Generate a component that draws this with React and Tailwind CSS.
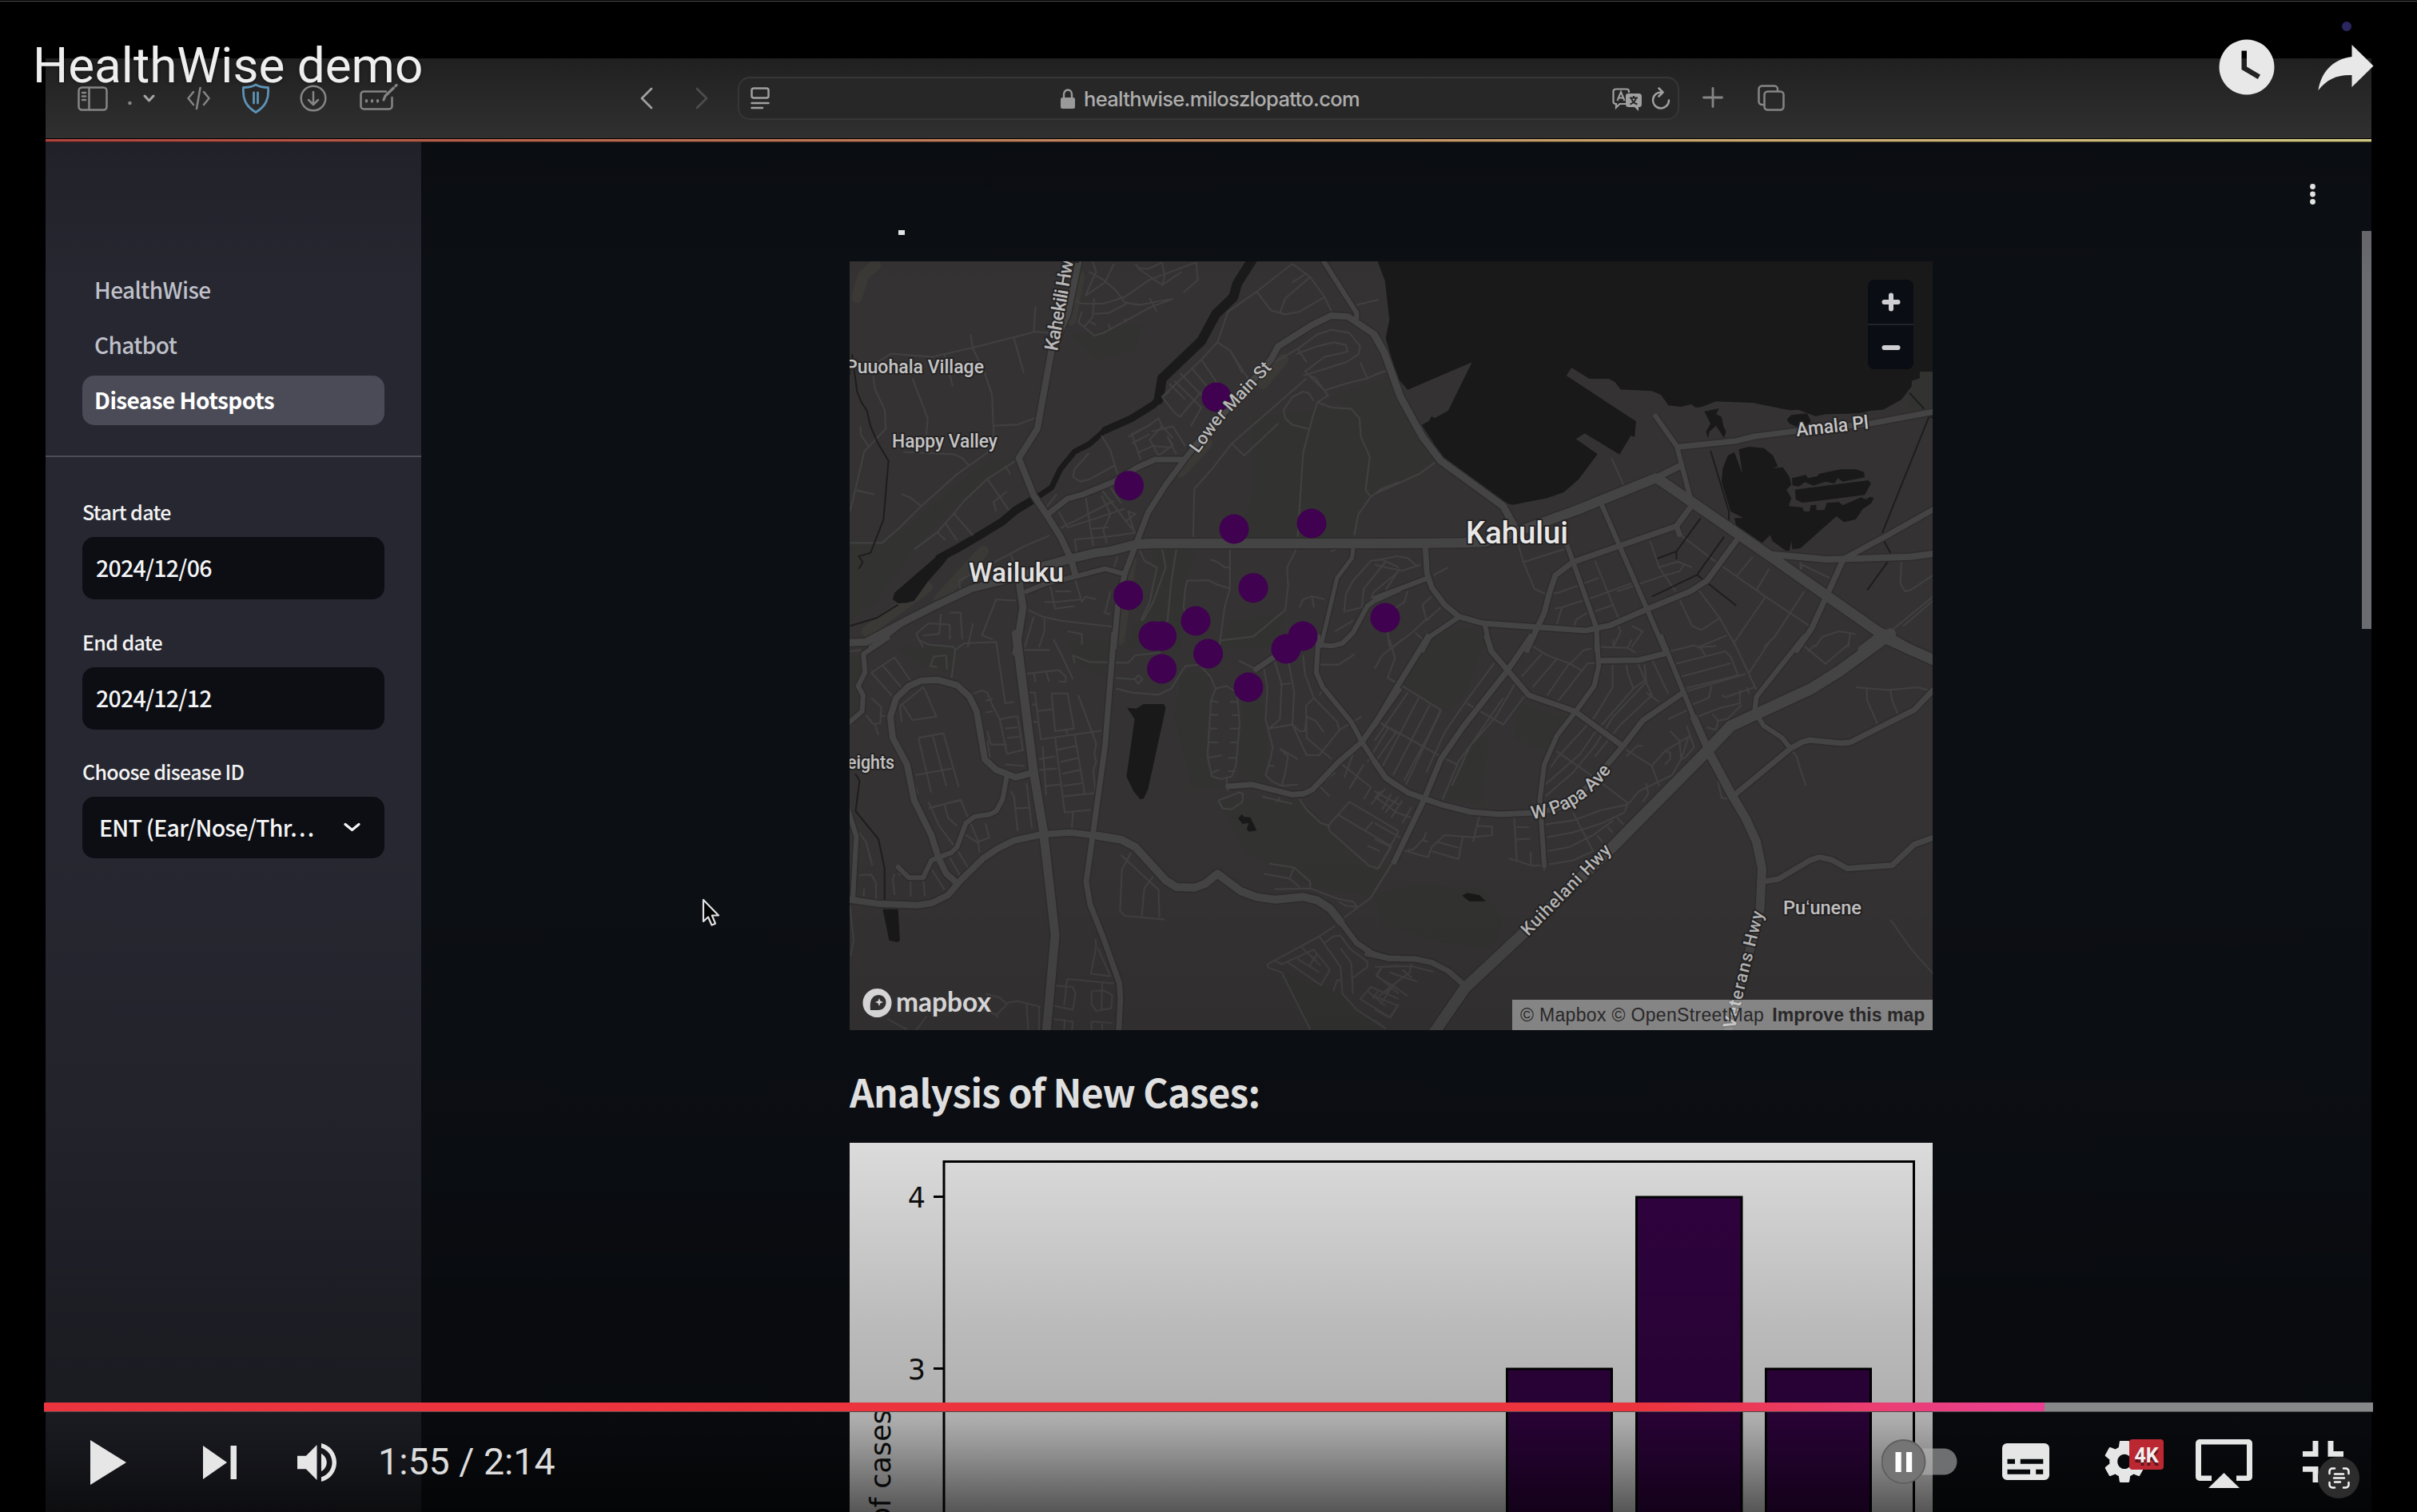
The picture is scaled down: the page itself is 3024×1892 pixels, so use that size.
import React from "react";

const CJK = "font-['Noto_Sans_CJK_SC',sans-serif]";

/* Each sheet of the map is digitised in its own grid and scaled into place. */
const SHEETS = {
  nw: "translate(1050 310) scale(0.446429 0.333333)",
  ne: "translate(1720 310) scale(0.459184 0.333333)",
  sw: "translate(1050 800) scale(0.446429 0.333333)",
  se: "translate(1720 800) scale(0.459184 0.333333)",
};

const GREEN = {
  nw: [
    "M1160 640L1330 610L1440 600L1470 700L1490 800L1480 910L1440 1085L1130 1085L1160 900Z",
    "M1380 560L1568 470V880L1490 930L1480 800L1450 640Z",
    "M30 1100L120 1105L200 1040L320 900L420 800L500 790L420 870L330 960L210 1130L100 1330L30 1400Z",
    "M650 330L850 280L830 380L720 420Z",
    "M880 1130H1000L960 1300L960 1500H800L880 1300Z",
    "M1100 1400L1250 1380L1220 1500H1060Z",
  ],
  ne: ["M0 500L60 560L130 720L165 805L100 860L0 920Z", "M1485 465H1521V600L1450 620L1463 520Z", "M160 1430L300 1430L310 1500H120Z"],
  sw: [
    "M960 120L1040 120L1030 480L1080 560L990 560L940 300Z",
    "M1160 120L1200 300L1200 540L1120 540L1130 240Z",
    "M1060 600L1290 600L1370 700L1480 850L1540 860L1480 960L1330 930L1200 840L1140 800Z",
    "M1250 1260L1400 1320L1520 1468H1320Z",
    "M30 60L60 60L68 180L60 280L30 300Z",
    "M160 30L320 20L320 130L240 100Z",
    "M640 0H760V150L660 90Z",
  ],
  se: [
    "M150 0L300 0L250 200L200 270L80 170Z",
    "M390 240L520 290L470 420L380 370Z",
    "M270 370L310 360L290 620L190 600Z",
    "M0 960L120 920L300 940L350 1060L320 1160L160 1130L20 1070Z",
  ],
};

const WATER = {
  nw: ["M265 1168L290 1150L315 1145L290 1190L250 1250L210 1325L190 1333L165 1335L150 1320L155 1295Z"],
  ne: [
    "M5 40L28 125L40 270L30 340L62 490L90 533L265 430L200 612L163 640L155 633L148 650L128 665L185 785L350 955L375 965L470 940L515 918L555 870L607 775L548 718L572 697L667 776L698 705L708 710L712 652L522 480L536 450L585 492L638 492L655 505L670 532L755 538L780 552L800 592L835 597L862 587L875 600L890 598L930 577L1030 582L1130 610L1155 608L1200 632L1230 625L1320 622L1350 612L1385 608L1435 570L1463 520L1463 500L1485 490L1485 465L1525 465L1525 40Z",
    "M962 780L980 768L1002 850L992 757L1020 747L1060 752L1085 780L1098 820L1085 827L1112 824L1130 860L1135 890L1122 908L1135 940L1128 970L1165 975L1170 990L1185 990L1188 967L1203 965L1203 985L1225 985L1232 958L1265 955L1275 967L1325 937L1338 945L1350 935L1360 940L1352 960L1330 980L1310 1020L1278 1030L1258 1008L1240 1030L1160 1128L1138 1132L1135 1100L1130 1137L1120 1137L1083 1100L1078 1078L1050 1115L985 1045L980 1015L1005 1015L970 990L945 880L948 830Z",
    "M1137 865L1175 853L1180 865L1205 858L1212 848L1270 832L1310 832L1333 842L1335 862L1275 878L1262 865L1252 885L1228 878L1195 893L1172 880L1155 897L1138 892Z",
    "M1145 908L1345 873L1352 885L1335 928L1165 957L1147 945Z",
    "M898 615L938 603L930 625L945 635L950 670L957 690L952 714L930 668L912 690L908 716L903 690L915 660Z",
    "M1123 645L1135 628L1178 622L1188 650L1180 668L1150 672L1130 660Z",
  ],
  sw: [
    "M807 257L832 260L853 243L910 243L915 258L865 565L853 598L843 600L825 570L805 515L828 300Z",
    "M122 1013L165 1013L170 1130L163 1137L140 1130Z",
    "M1118 672L1128 657L1135 667L1152 668L1170 718L1148 722L1142 712L1148 690L1130 693Z",
  ],
  se: ["M238 962L252 952L285 960L303 983L258 984Z"],
};

const RIVER = [
  ["M1160 40L1115 135L1105 185L1055 250L1015 350L905 490L895 570", 12],
  ["M905 490L895 570L880 590L820 640L745 685", 9],
  ["M745 685L700 738L660 765L620 830L595 900L545 945", 7],
  ["M545 945L495 985L455 1030L400 1075L330 1130L280 1165", 10],
];

const CREEK = {
  nw: ["M36 400L50 540L62 580L77 610L88 670L107 730L138 800L124 1020L88 1145L55 1158L66 1180L55 1205", "M165 1340L105 1390L30 1420"],
  ne: [
    "M915 762L965 990L965 1030", "M888 1015L822 1140L770 1167M822 1140V1170", "M952 1085L878 1228L755 1310M878 1228L985 1343",
    "M1510 635L1383 1070M1387 1100L1405 1145M1397 1180L1342 1285", "M1457 545L1497 605M1510 630L1521 640",
  ],
  sw: ["M45 505L57 530L46 645L110 750L127 860V985"],
  se: [],
};

const MINOR = {
  nw: [
    "M105 430L145 398L260 410L375 375L550 315L590 320M550 220L545 315M490 340L517 470M295 400L318 520M368 325L375 380L405 460L428 550L433 700L415 770L330 850L230 970L170 1050L120 1108H30",
    "M205 490L248 640L243 720M95 480L100 530L128 610L130 680L70 765L45 910L30 990M45 910L98 926M60 670V700L82 745M180 767L320 775L345 790L365 820M175 925L200 938L230 970",
    "M500 795L415 868L350 950L320 1000L275 1068L210 1133M275 1068L298 1098M298 1035L330 1098M320 995L375 1080M415 868L450 935L475 985M465 820L480 850M470 915L432 955L440 990",
    "M433 668L500 664L548 640M645 190L680 210L740 210L800 185L870 120L1000 55M770 60L745 130L690 180M700 90L740 120L775 160L800 205L840 215L935 192M830 60L840 80L905 140L960 90M835 75L865 80L905 55M905 55L912 110L905 140M1000 55L1005 120L965 168M870 190L890 240M710 50L720 90L690 180",
    "M680 240L670 280L715 330L740 320L870 225L935 192M715 190L710 260L685 300M700 275L720 290M755 285L760 310M715 248L755 245L805 210M800 265L803 280",
    "M1270 60L1170 165L1090 240L1060 355L1015 420L905 560L940 620L955 635L1015 540M1060 355L1095 385L1150 500L1220 430L1290 375L1340 325L1380 308L1430 320L1460 370L1455 400L1420 430L1300 480M1170 165L1210 235L1250 250L1290 240L1360 185M1270 60L1320 110L1360 185L1380 240M1320 110L1250 190L1235 245M1270 130L1310 95M1450 215L1510 195",
    "M1280 400L1340 370L1385 355L1420 365L1425 390L1360 410L1305 465L1360 535L1420 510L1480 490L1530 462M1285 380L1310 430M1460 430L1480 490M1310 475L1335 490L1370 555L1340 580L1330 620L1300 770L1285 1085M1340 580L1380 600L1435 605L1458 640L1462 710L1487 785L1475 910L1490 935L1455 1000L1443 1080M1490 935L1520 905L1568 880M1330 575L1315 545L1300 540L1270 560L1245 610L1250 640L1270 665L1315 680M1230 660L1135 780L1100 735L1310 490",
    "M1100 735L1045 830L995 905L992 1085M940 500L1015 600L985 670M955 470L1020 560M990 455L1055 560M1015 420L1060 510M925 510L970 570M905 560L925 540M1095 385L1130 470",
    "M810 710L870 665L820 700L845 795M870 665L895 640L905 670L870 720L895 780L935 740L920 710L945 775M820 735L870 700M835 770L885 740M875 690L935 670L970 745M905 670L935 715M885 745L930 750",
    "M735 705L760 760L780 850M700 770L660 830L655 860L675 878L700 870L775 815M730 900L800 1020L830 1070M755 890L790 960M690 930L712 1120M610 1060L770 950M615 990L640 1050L710 1020L800 980M735 930L760 1000L740 1060L750 1110M660 1095L750 1085L830 1070M660 1095L665 1140M705 1055L755 1050M800 1030L830 1000L810 990L825 1060M580 975L610 925M590 1080L520 1120L420 1190L335 1250L340 1290",
    "M480 1150L505 1230M780 1160L770 1200M840 1130L855 1175L890 1200L870 1330L845 1400M905 1130L915 1200L880 1330L850 1400M945 1130L930 1260L920 1400L880 1460M970 1280L975 1250L1035 1248L1060 1265L1095 1280M970 1280L965 1350L975 1400M1095 1130V1280L1080 1350L1065 1500M1040 1170L1060 1180L1080 1200H1095M1280 1135L1255 1200L1258 1270L1250 1360L1160 1460L1065 1475M1290 1350L1300 1320L1325 1308L1360 1320M1330 1350L1325 1310",
    "M530 1360L570 1385L620 1400L780 1425M545 1385L520 1500M575 1385V1440L560 1500M590 1260L605 1355L660 1345M605 1290H650M660 1240L680 1330L690 1310L720 1320M605 1330L680 1320M575 1330H605M760 1290L745 1370M740 1370L760 1375M440 1320L495 1325M440 1320L400 1455L430 1470M310 1370L340 1370L345 1470M250 1410L310 1415V1470M285 1375L280 1450L235 1455M215 1450L250 1410M215 1450L235 1500M375 1410L360 1500M640 1440L680 1450L680 1490",
    "M1568 1200L1520 1170L1490 1175L1440 1250L1420 1300L1415 1370M1530 1180L1470 1280L1465 1350L1420 1365M1568 1215L1500 1290L1480 1345M1390 1440L1440 1400M1378 1140L1395 1130",
  ],
  ne: [
    "M0 200L10 195M0 475L35 462M0 925L120 850L165 805M645 790L678 890M390 1110L405 1180L435 1280L465 1300L500 1295L610 1240M405 1180L520 1130M600 1175L640 1310L670 1410M490 1355L510 1350L600 1310L700 1260M510 1350L495 1420M600 1365L650 1340M660 1290L790 1230M750 1100L775 1200L820 1290M775 1200L825 1178L865 1200M790 1230L830 1215L845 1185M540 1430L550 1395L580 1370",
    "M830 1075L925 1175L1065 1310L1185 1420M1030 1160L985 1235M1075 1205L1040 1285M1170 1290L1090 1460L1060 1500M1065 1310L980 1480M880 1280L940 1390L985 1500M830 1320L865 1420L890 1435L940 1390M1160 1180V1210L1165 1190L1240 1240M1435 1180L1432 1260L1445 1290L1460 1285L1521 1230M1521 1310L1405 1440M1521 1325L1440 1420M1310 1450L1265 1440L1220 1460L1200 1500M1295 1450L1290 1500M960 1455L880 1500",
    "M0 1190L30 1200L75 1212L125 1190M0 1175L60 1158L90 1165L115 1195M65 1210L30 1285M160 1230L200 1200M90 1290L80 1330L50 1360M155 1310L130 1340L140 1395L105 1440L50 1500M180 1350L140 1400M110 1445L130 1470M35 1440L40 1500M660 1410L670 1440L650 1500M700 1420L730 1440L700 1500",
  ],
  sw: [
    "M30 45L60 40M220 0L250 20L320 28L325 40L315 145M325 40L350 15L440 10L465 240L490 235M300 60L265 65L255 100L275 105M300 60L302 115M90 125L155 68L205 165L150 215L90 125M120 95L180 190M90 220L118 255L115 315L95 318L75 285M115 288H135M100 318L110 360M175 310L170 250L235 180L240 190L272 290L205 303L175 240M375 205L400 192L415 200L430 250L450 300L490 290L500 290L515 420M450 300L470 430L515 415M410 275L430 270M430 225L410 230M465 335L500 330M470 370L505 365M465 470L520 475",
    "M222 370L292 352L335 555M222 370L258 575M262 362L300 550M213 510L315 485M160 370L190 450L220 580M250 635L340 602L390 760L420 745L410 690M250 610L280 700L330 790L365 865M258 630L340 605M295 620L305 670L330 700M350 730L390 765L393 800M415 345L425 395H470M425 470L415 380",
    "M520 130L615 115L635 140V160L615 158M545 125L550 160M580 120L588 160M515 40H590M600 0L620 50L655 150M655 60L700 85L810 88L830 60L900 50M655 60L660 90M595 203H640L658 335L605 345L595 203M525 200H548L565 375L735 343M540 245H550M555 270L598 262M535 310H560M670 210L720 390L715 430L720 460L712 490L718 575M605 370L632 650L705 640M660 360L688 580M625 590L715 578M610 415L665 400M620 460L670 445M625 505L675 490M628 550L680 540M570 400L580 585M605 440L560 450M620 545L580 550M655 650L652 710M635 340L640 355",
    "M480 570L490 590L500 720M495 635L535 632M525 540L540 710M560 490L610 485M55 725L75 760L93 850M55 885L90 883L103 915V975M70 935L68 965M155 880L150 900L155 960M165 880L200 900V965M235 895L240 965M260 865L295 940M310 820L340 890M775 145L828 150L838 135L850 150L838 167L828 150M775 185L820 200L895 208L930 185L970 100L1010 95L1040 140L1055 185",
    "M1055 185L1042 230L1032 440L1045 515L1070 525L1100 515L1112 470L1122 320L1115 200L1085 175L1055 185M1042 230L1062 237M1040 283H1062M1038 335H1060M1035 387H1062M1034 445L1072 435M1045 500L1065 490M1115 235H1095M1120 285H1100M1120 335H1095M1118 387H1095M1115 445H1090M1112 495H1090M1085 520L1090 570M1062 605L1120 575L1132 580L1130 610L1100 638L1075 635L1062 605M1120 80L1165 110M1185 590L1270 618M1235 595L1225 610",
    "M1190 110L1200 180L1195 300L1215 405L1210 440L1195 510L1215 535L1240 550L1285 545M1220 80L1240 170L1235 300L1205 335M1260 90L1275 200L1270 320L1290 345H1305L1310 290M1300 60L1305 130L1330 220L1308 250L1310 370L1380 450M1330 220L1395 310L1402 340L1345 435L1310 435L1270 320M1235 410L1258 440L1250 500L1240 550M1235 410L1285 450M1200 475H1220M1310 290L1335 305L1358 350M1345 210L1360 180M1235 170L1265 165M1205 335L1270 320M1340 95H1400L1445 55M1402 340L1465 290",
    "M1510 310L1568 355M1560 350L1500 465M1540 330L1480 460M1400 460L1490 555L1470 600M1440 430L1415 520M1470 470L1430 560M1390 500L1345 550L1375 590M1430 610L1370 700L1375 720L1485 850L1510 860L1568 720M1430 610L1568 720M1400 660L1545 775M1495 685L1475 715M1480 775L1515 795M1290 600L1310 640L1350 690L1375 700M1530 560L1490 620M1568 590L1530 650M1500 570L1568 620",
    "M790 810L830 860L895 940L897 1045M818 800L792 865L787 1020L800 1038L912 1052M880 890L855 935L848 1040M1205 842L1275 857L1320 910V935L1220 938M1190 880L1262 898L1290 930M1275 857L1262 898M1320 935L1400 975L1440 985L1452 1005L1420 1000L1400 985M1550 840L1490 970L1415 1045",
    "M1390 1075L1345 1115L1200 1220L1202 1232L1240 1250L1320 1465M1345 1115L1405 1230L1410 1330L1450 1390L1530 1460M1360 1140L1385 1115L1405 1112L1430 1160L1480 1210V1230L1440 1270M1220 1205L1240 1220L1330 1165L1375 1240L1350 1298L1255 1210M1295 1155L1350 1225M1285 1200L1345 1250M1340 1180L1318 1225M1405 1160L1435 1215L1440 1330M1385 1320L1395 1280H1410M1568 1225L1520 1230L1505 1260L1568 1330M1568 1350L1490 1305L1460 1350L1545 1420L1568 1370M1480 1320L1530 1375M1510 1320L1495 1350M1568 1280L1530 1330",
    "M718 1125L720 1155L705 1255L760 1265L725 1160M635 1300L640 1275L770 1292M605 1300L655 1305L662 1330L655 1390L600 1375M637 1300L630 1375M710 1320L740 1318L765 1335L762 1385L720 1395L707 1370V1320M737 1290L735 1390M600 1425L655 1435L652 1468M632 1425L630 1468M707 1468V1435L765 1440M737 1435V1468M410 1330L450 1345L470 1370L440 1410L400 1385M440 1410L445 1420M470 1365L500 1358L565 1380M525 1370L530 1468M560 1380V1468M245 1415L215 1468M135 1425L190 1465M30 1000L40 1130L32 1190",
  ],
  se: [
    "M40 0L55 70L35 145L50 155M75 0L20 60L0 110M75 175L180 265L150 350L80 530M35 145L75 175M90 200L0 380M120 220L20 480M150 245L50 510M180 270L85 545M10 310L90 370L180 440L225 470L185 600M225 465L265 390L350 220M325 90L250 230L190 350L140 500M385 160L330 290L260 400L210 550M250 240L350 320L415 200M430 25L470 60L530 90L562 115M455 55L400 140M495 75L430 180M530 90L470 210M600 90L580 90L495 240M570 40L590 35M570 40L530 95",
    "M610 28L690 32L710 50M650 0V25M700 0L690 30M648 95V180L600 290L500 440L480 480M685 95L690 130L705 185L600 350L560 430L465 545M735 95L740 160L650 290L600 400L540 500L465 590M715 85L755 210L670 320L600 440M755 75L800 205M705 185L735 155M740 200L775 235M805 45L870 22L890 35L900 60M880 30L930 25M820 92L955 45L970 65L990 135L830 190M835 140L970 90M850 195L1010 130M975 0L1040 190M1080 0L1020 125",
    "M865 245L910 220L918 175M880 290L935 260L995 240V190M920 280L935 305L960 300L1000 245M905 330L930 340L935 305M945 210L960 220M960 215L1035 180M1015 180L1020 205M800 300L860 260M850 325L870 405L845 445L835 450L855 365L790 420L755 475L775 550M805 345L830 380L835 450L810 510L720 570L690 620M790 470L805 450V425L790 420M680 410L755 475M730 400L715 400L685 440M740 540L745 580L730 610M495 420L600 520L690 615L680 650",
    "M465 695L540 680L620 640L690 620M470 743L540 725L620 690L680 650M470 795L530 780L595 735L650 680M475 845L540 830L595 795L540 650M365 822L430 850L462 848V868M425 797V848M380 670L387 828M385 705H420M387 752L425 748M605 735L620 760M635 705L648 725M660 670L678 695M285 665L278 700L320 703V735L268 743L190 735L155 780L145 818L80 793M278 700L268 760M240 740L228 825L155 795M170 760L230 783M140 725L132 755L145 760M132 750L105 790H92L95 800",
    "M1310 180L1400 190L1480 180L1505 190L1521 210M1340 185L1342 230L1370 318M1405 190L1410 230L1425 280M1170 25L1228 92L1290 20M1200 20L1180 45M1137 420L1150 440L1160 490L1175 550M935 530L945 595L965 598M1405 1052L1460 1160L1521 1255M0 590L60 650L100 670M15 570L0 600M45 580L20 640M75 605L45 670M100 630L75 690M0 690L70 745M0 750L45 780L10 860L0 860M45 845L0 945",
    "M0 1230L100 1227L160 1248M100 1217L95 1250L10 1340M20 1230L5 1265L60 1310L90 1340M40 1250L115 1285M75 1240L100 1270M50 1300L15 1370M0 1340L62 1375L40 1420L0 1390M0 1430L30 1462",
  ],
};

const MAJOR = {
  nw: [
    ["M0 1485L75 1480L180 1405L260 1350L370 1280L460 1250L640 1172", 9],
    ["M90 1500L180 1405", 7],
    ["M560 1200L640 1170L720 1145L760 1138L835 1112L885 1108", 11],
    ["M835 1113L885 1110H1568", 12],
    ["M672 45L640 250L595 385L555 680L503 790L545 930L585 1010L620 1085L650 1170L662 1230", 8],
    ["M585 1000L640 942L685 925L775 875L835 825L885 795H965", 7],
    ["M1000 740L965 800L915 890L865 995L835 1100L800 1225L780 1350L770 1500", 7],
    ["M1000 740L1210 420L1230 370L1325 290L1378 255L1425 258L1500 325L1530 400L1568 540", 8],
    ["M1355 45L1450 245V270", 6],
    ["M525 1290L580 1260L660 1235L745 1205L800 1225", 6],
    ["M505 1260L515 1350L495 1520", 9],
    ["M1440 1130L1437 1165L1395 1240L1350 1495", 5],
    ["M1345 1490L1380 1495L1410 1485L1440 1445L1480 1345L1500 1325L1568 1285", 6],
  ],
  ne: [
    ["M0 330L25 390L70 560L130 710L180 800L350 970L378 1040", 9],
    ["M0 1110L240 1108L300 1105L400 1060L550 985L765 865", 12],
    ["M765 865L830 820", 8],
    ["M775 870L1090 1170L1370 1440L1460 1510", 13],
    ["M765 632L823 745L860 940", 6],
    ["M828 748L985 725L1035 708L1150 688L1350 660L1525 615", 7],
    ["M865 965L822 1045L830 1075", 7],
    ["M822 1045L665 1120L540 1180L492 1230L475 1300L462 1370L415 1510", 7],
    ["M620 970L790 1510", 6],
    ["M525 1120L605 1430V1510", 6],
    ["M138 1125L142 1220L155 1275L190 1340L230 1385L295 1410L575 1437L640 1418L750 1352L860 1290L905 1250L985 1100", 7],
    ["M0 1315L145 1240", 6],
    ["M230 1385L150 1460L130 1510", 6],
    ["M300 1415L315 1510", 6],
    ["M1070 1150L1230 1170L1290 1168L1460 1160L1525 1148", 8],
    ["M1275 1170L1390 1085L1525 980", 7],
    ["M1275 1175L1230 1310L1190 1430L1150 1510", 7],
    ["M1388 1450L1330 1510", 13],
  ],
  sw: [
    ["M20 8L75 13L110 -15", 7],
    ["M135 -5L68 55L72 125L53 175L67 210L64 270L30 310", 6],
    ["M496 -20L545 500L572 720L605 1110L580 1480", 11],
    ["M770 -20L745 400L710 740L692 910L703 995L740 1120L785 1290L788 1350L783 1480", 7],
    ["M330 915L300 880L278 820L258 735L210 605L190 470L150 370L143 290L160 220L195 175L230 155L275 152L330 172L365 215L385 270L408 450L440 490L495 518L545 500", 8],
    ["M470 510L458 600L440 645L420 658L380 665L355 690L330 780L315 800L258 830L235 895H195L165 855", 6],
    ["M20 975L105 992L220 998L260 990L305 960L340 905L405 820L445 785L490 755L570 732L650 725L725 738", 8],
    ["M725 738L790 752L830 780L915 905L945 930L995 932L1025 918L1060 880L1125 945L1170 968L1220 977L1300 967L1340 980L1375 1010L1405 1060", 10],
    ["M1405 1060L1450 1140L1495 1180L1540 1198H1568", 7],
    ["M25 640L48 740L38 975", 6],
    ["M1343 -10L1337 125L1355 180L1435 310L1465 385L1530 520L1568 555", 6],
    ["M1568 190L1465 385L1400 460L1325 565L1300 580L1270 583L1155 545L1090 552", 7],
    ["M1168 112L1220 65", 7],
  ],
  se: [
    ["M145 -10L60 180L0 320", 7],
    ["M425 -10L360 120L240 330L180 450L135 600L53 835", 7],
    ["M305 -10L318 45L420 210L545 270L675 400", 7],
    ["M605 -10L610 100L598 175L548 270L497 360L462 470L450 600L462 850", 6],
    ["M0 460L30 520L90 575L180 620L260 648L340 657L450 650L520 625L590 540L680 395L730 305L835 205", 7],
    ["M780 -10L870 295", 6],
    ["M870 295L910 420", 9],
    ["M905 410L975 590L1010 670L1040 760L1055 860L1050 1010L1025 1150L960 1480", 11],
    ["M612 80L720 78L795 52", 7],
    ["M1405 -20L1265 120L1190 185L970 325L905 420L640 790L400 1110L245 1310L160 1480", 14],
    ["M1390 -5L1530 82", 13],
    ["M1170 -10L1040 215L1035 270L1060 325L1110 370L1133 410", 6],
    ["M975 590L1133 410L1165 385L1185 378L1270 390L1295 387L1470 265L1525 185", 7],
    ["M1065 908L1100 900L1185 830L1212 818L1245 828L1287 860L1410 848L1470 770L1525 743", 7],
    ["M-20 1180L40 1198L110 1200L155 1213L200 1245L250 1305", 7],
  ],
};

const CASES = [
  [1522, 497], [1412.5, 607.7], [1544, 662], [1641, 655], [1411.6, 745], [1568, 735.7], [1496, 777], [1443, 796],
  [1453.6, 796], [1630, 796], [1609, 812], [1511.6, 818], [1453.6, 837], [1562, 860], [1733, 773],
];

const SHEET_IDS = ["nw", "ne", "sw", "se"];

function Sheets({ children }) {
  return SHEET_IDS.map((id) => (
    <g key={id} transform={SHEETS[id]}>
      {children(id)}
    </g>
  ));
}

function MapLabel({ x, y, size, width, weight = 500, rotate = 0, fill = "#c4c4c4", children }) {
  return (
    <text
      x={x} y={y} fontSize={size} fontWeight={weight} fill={fill} textLength={width} lengthAdjust="spacingAndGlyphs"
      transform={rotate ? `rotate(${rotate} ${x} ${y})` : undefined}
      stroke="#252324" strokeWidth="4" strokeLinejoin="round" paintOrder="stroke" fontFamily="Roboto, sans-serif"
    >
      {children}
    </text>
  );
}

function PathLabel({ id, d, size, width, halo = 4, children }) {
  return (
    <>
      <path id={id} d={d} fill="none" />
      <text
        fontSize={size} fontWeight="500" fill="#b8b8b8" stroke="#252324" strokeWidth={halo} strokeLinejoin="round"
        paintOrder="stroke" fontFamily="Roboto, sans-serif" textLength={width}
      >
        <textPath href={"#" + id} textLength={width}>{children}</textPath>
      </text>
    </>
  );
}

function HotspotMap() {
  return (
    <div className="relative h-[962px] w-[1355px] overflow-hidden bg-[#343233]">
      <svg viewBox="1063 327 1355 962" className="block h-[962px] w-[1355px]">
        <Sheets>{(id) => GREEN[id].map((d) => <path key={d} d={d} fill="#323330" />)}</Sheets>
        <g stroke="#3c3b37" strokeWidth="14" strokeLinecap="round" fill="none" opacity=".8">
          <path d="M1072 372L1080 345L1095 332M1175 750L1230 690M1085 790L1160 735M1340 400L1350 345M1478 590L1510 555M1400 800L1415 700M1580 480L1605 450" />
        </g>
        <g transform={SHEETS.nw} fill="none" stroke="#1a1a1a" strokeLinecap="round" strokeLinejoin="round">
          {RIVER.map(([d, w]) => <path key={d} d={d} strokeWidth={w} vectorEffect="non-scaling-stroke" />)}
        </g>
        <Sheets>{(id) => WATER[id].map((d) => <path key={d} d={d} fill="#191919" />)}</Sheets>
        <Sheets>
          {(id) => MINOR[id].map((d) => (
            <path key={d} d={d} fill="none" stroke="#414040" strokeWidth="2.2" strokeLinejoin="round" vectorEffect="non-scaling-stroke" />
          ))}
        </Sheets>
        <Sheets>
          {(id) => CREEK[id].map((d) => (
            <path key={d} d={d} fill="none" stroke="#1e1d1e" strokeWidth="2" vectorEffect="non-scaling-stroke" />
          ))}
        </Sheets>
        <Sheets>
          {(id) => MAJOR[id].map(([d, w]) => (
            <path key={d} d={d} fill="none" stroke="#2e2c2d" strokeWidth={w + 3} strokeLinejoin="round" vectorEffect="non-scaling-stroke" />
          ))}
        </Sheets>
        <Sheets>
          {(id) => MAJOR[id].map(([d, w]) => (
            <path key={d} d={d} fill="none" stroke="#454444" strokeWidth={w} strokeLinejoin="round" strokeLinecap="round" vectorEffect="non-scaling-stroke" />
          ))}
        </Sheets>

        <g fill="#3f0150">
          {CASES.map(([x, y]) => <circle key={x + "-" + y} cx={x} cy={y} r="18.5" />)}
        </g>

        <MapLabel x={1058} y={467} size={24} width={173}>Puuohala Village</MapLabel>
        <MapLabel x={1116} y={560} size={24} width={132}>Happy Valley</MapLabel>
        <MapLabel x={1212} y={727.5} size={33} width={119} fill="#e2e2e2">Wailuku</MapLabel>
        <MapLabel x={1834} y={680} size={38} width={128} fill="#e8e8e8">Kahului</MapLabel>
        <MapLabel x={2248} y={546} size={24} width={91} rotate={-6}>Amala Pl</MapLabel>
        <MapLabel x={1060} y={962} size={24} width={59}>eights</MapLabel>
        <MapLabel x={2231} y={1144} size={24} width={98}>Puʻunene</MapLabel>
        <PathLabel id="lower-main" d="M1499 568L1527 530L1600 452" size={22} width={142} halo={2.5}>Lower Main St</PathLabel>
        <PathLabel id="kahekili" d="M1323 440L1333 385L1345 315L1348 290" size={24} width={126}>Kahekili Hwy</PathLabel>
        <PathLabel id="papa" d="M1917 1025C1960 1020 1995 995 2020 958" size={23} width={120}>W Papa Ave</PathLabel>
        <PathLabel id="kuihelani" d="M1912 1172L2019 1063" size={22} width={150}>Kuihelani Hwy</PathLabel>
        <PathLabel id="veterans" d="M2162 1314L2170 1290L2184 1232L2209 1132" size={22} width={178}>ui Veterans Hwy</PathLabel>

        <g fill="#e3e3e3">
          <path fillRule="evenodd" d="M1097.500 1237a18 18 0 1 0 .001 0zM1099 1245c6 0 9.500 4 9.500 9c0 6-4 10-10 10h-9.500s-1-8 1-13c2-4 5-6 9-6z" />
          <path d="M1100 1249l1.400 3.600l3.600 1.400l-3.600 1.400l-1.400 3.600l-1.400-3.600l-3.600-1.400l3.600-1.400z" />
          <text x="1121" y="1266" fontSize="35" fontWeight="700" textLength="119" lengthAdjust="spacingAndGlyphs" fontFamily="Lato, sans-serif">mapbox</text>
        </g>
      </svg>

      <div className="absolute right-[24px] top-[23px] flex h-[112px] w-[57px] flex-col overflow-hidden rounded-[8px] bg-[#0b0d14] text-[#cfcfd3]">
        <div className="flex h-[57px] items-center justify-center border-b-2 border-[#22242c]">
          <svg className="h-[24px] w-[24px]" viewBox="0 0 24 24"><path d="M12 3.500V20.500M3.500 12H20.500" stroke="currentColor" strokeWidth="6" strokeLinecap="round" /></svg>
        </div>
        <div className="flex h-[55px] items-center justify-center">
          <svg className="h-[24px] w-[24px]" viewBox="0 0 24 24"><path d="M3.500 12H20.500" stroke="currentColor" strokeWidth="6" strokeLinecap="round" /></svg>
        </div>
      </div>

      <div className="absolute bottom-0 right-0 flex h-[38px] w-[526px] items-center bg-white/45 pl-[10px] font-['Liberation_Sans',sans-serif] text-[23px] text-[#2b2b2b]">
        <span className="whitespace-pre tracking-[0.33px]">© Mapbox © OpenStreetMap</span>
        <span className="ml-[10px] whitespace-pre font-bold tracking-[0.05px]">Improve this map</span>
      </div>
    </div>
  );
}

function CasesChart() {
  return (
    <svg viewBox="1063 1430 1355 462" className="block h-[462px] w-[1355px] shrink-0 bg-[#fcfcfc]">
      <g fill="#38034a" stroke="#000" strokeWidth="3">
        <rect x="1885.500" y="1713" width="131" height="300" />
        <rect x="2047.500" y="1498" width="131.500" height="500" />
        <rect x="2209.500" y="1713" width="131" height="300" />
      </g>
      <path d="M1181 1950V1453.500H2394.500V1950M1168 1497.500H1181M1168 1712.500H1181" fill="none" stroke="#000" strokeWidth="3" />
      <g fontFamily="'DejaVu Sans', sans-serif" fontSize="35" fill="#111">
        <text x="1158" y="1510.500" textAnchor="end">4</text>
        <text x="1158" y="1725.500" textAnchor="end">3</text>
        <text transform="translate(1114 1764) rotate(-90)" textAnchor="end">of cases</text>
      </g>
    </svg>
  );
}

const stroke = { fill: "none", stroke: "currentColor", strokeWidth: 2.5, strokeLinecap: "round", strokeLinejoin: "round" };

function BrowserToolbar() {
  return (
    <div className="flex h-[101px] shrink-0 items-center border-b border-black bg-linear-to-b from-[#202020] to-[#303030] text-[#858585]">
      <svg className="ml-[40px] h-[31px] w-[38px]" viewBox="0 0 38 31" {...stroke}>
        <rect x="1.500" y="1.500" width="35" height="28" rx="4" /><path d="M14.500 2V29M6 8h4M6 12.500h4M6 17h4" />
      </svg>
      <svg className="ml-[25px] h-[20px] w-[5px]" viewBox="0 0 5 20"><circle cx="2.500" cy="16" r="2.300" fill="currentColor" /></svg>
      <svg className="ml-[14px] h-[10px] w-[15px] text-[#a5a5a5]" viewBox="0 0 15 10" {...stroke} strokeWidth="3"><path d="M2 2L7.500 8L13 2" /></svg>
      <svg className="ml-[40px] h-[30px] w-[29px]" viewBox="0 0 29 30" {...stroke}><path d="M8 7L1.500 15L8 23M21 7L27.500 15L21 23M16.500 2L12 28" /></svg>
      <svg className="ml-[39px] h-[38px] w-[36px] text-[#5c93b6]" viewBox="0 0 36 38" {...stroke} strokeWidth="2.800">
        <path d="M18 2c5 3 10 3.500 15.500 3.500c1 13-2 23-15.500 31C4.500 28.500 1.500 18.500 2.500 5.500C8 5.500 13 5 18 2z" /><path d="M15.500 12v13M20.500 12v13" />
      </svg>
      <svg className="ml-[37px] h-[34px] w-[34px]" viewBox="0 0 34 34" {...stroke}><circle cx="17" cy="17" r="15.300" /><path d="M17 9V25M11 19L17 25L23 19" /></svg>
      <svg className="-mt-[2px] ml-[41px] h-[34px] w-[48px]" viewBox="0 0 48 34" {...stroke}>
        <path d="M33 9.500H5a3.500 3.500 0 0 0-3.500 3.500V28a3.500 3.500 0 0 0 3.500 3.500H37a3.500 3.500 0 0 0 3.500-3.500V17" />
        <path d="M30 20l2-5L42.500 5M45 2.500l1-1M8.500 20.500v1.500M15.500 20.500v1.500M22.500 20.500v1.500" strokeWidth="3.200" />
      </svg>
      <svg className="ml-[303px] h-[28px] w-[16px] text-[#a0a0a0]" viewBox="0 0 16 28" {...stroke} strokeWidth="2.800"><path d="M14 2L2 14L14 26" /></svg>
      <svg className="ml-[53px] h-[28px] w-[16px] text-[#4c4c4c]" viewBox="0 0 16 28" {...stroke} strokeWidth="2.800"><path d="M2 2L14 14L2 26" /></svg>
      <div className="ml-[37px] flex h-[54px] w-[1178px] items-center rounded-[15px] border-2 border-[#363636] bg-[#272727]">
        <svg className="ml-[14px] h-[28px] w-[24px] text-[#a0a0a0]" viewBox="0 0 24 28" {...stroke}><rect x="1.500" y="1.500" width="21" height="12" rx="2.500" /><path d="M1.500 20H22.500M1.500 26H15" /></svg>
        <svg className="ml-[364px] mt-[2px] h-[26px] w-[18px] text-[#9a9a9a]" viewBox="0 0 18 26"><rect x="0" y="11" width="18" height="14" rx="2.500" fill="currentColor" /><path d="M4 12V7a5 5.500 0 0 1 10 0v5" fill="none" stroke="currentColor" strokeWidth="2.400" /></svg>
        <span className="ml-[11px] mt-[2px] w-[345px] whitespace-pre font-['Inter',sans-serif] text-[25.5px] font-medium leading-[30px] tracking-[-0.66px] text-[#adadad]">healthwise.miloszlopatto.com</span>
        <svg className="ml-[316px] mt-[3px] h-[30px] w-[38px] text-[#a0a0a0]" viewBox="0 0 38 30">
          <path d="M19 20H9.500L5 24.500V20H4.500a3 3 0 0 1-3-3V4.500a3 3 0 0 1 3-3H18a3 3 0 0 1 3 3V6" fill="none" stroke="currentColor" strokeWidth="2.200" />
          <path d="M6.500 16L11 5l4.500 11M8 12.500h6" fill="none" stroke="currentColor" strokeWidth="2" />
          <path d="M20 7H33.500A3.500 3.500 0 0 1 37 10.500V20.500A3.500 3.500 0 0 1 33.500 24H33V29L28 24H20.500A3.500 3.500 0 0 1 17 20.500V10A3 3 0 0 1 20 7Z" fill="currentColor" />
          <path d="M22 12.500H32M27 10V12.500M30 12.500C29 17 26 19 22.500 20.500M24 12.500C25 17 28 19.500 31.500 20.500" fill="none" stroke="#272727" strokeWidth="2" />
        </svg>
        <svg className="ml-[11px] h-[28px] w-[24px] text-[#a0a0a0]" viewBox="0 0 24 28" {...stroke}><path d="M13 6.500A10 10 0 1 0 22 16.500M9.500 1.500L14.500 6.500L9.500 11.500" /></svg>
      </div>
      <svg className="-mt-[2px] ml-[29px] h-[26px] w-[26px]" viewBox="0 0 26 26" {...stroke} strokeWidth="2.800"><path d="M13 1.500V24.500M1.500 13H24.500" /></svg>
      <svg className="-mt-[2px] ml-[43px] h-[33px] w-[34px]" viewBox="0 0 34 33" {...stroke}>
        <rect x="8.500" y="8.500" width="24" height="23" rx="4" /><path d="M8 25H5.500A4 4 0 0 1 1.500 21V5.500A4 4 0 0 1 5.500 1.500H21A4 4 0 0 1 25 5.500V8" />
      </svg>
    </div>
  );
}

function Field({ label, value }) {
  return (
    <div className="mb-[21px] flex flex-col">
      <span className="h-[64px] whitespace-pre pt-[15px] text-[25px] font-medium leading-[34px] tracking-[-0.65px] text-[#f3f3f4]">{label}</span>
      <div className="flex h-[78px] items-center rounded-[15px] bg-[#0c0e14] pl-[17px] text-[28.5px] font-medium leading-[36px] tracking-[-0.75px] text-[#f5f5f6]">
        <span className="-translate-y-px whitespace-pre">{value}</span>
      </div>
    </div>
  );
}

function Sidebar() {
  return (
    <aside className={"flex w-[470px] shrink-0 flex-col bg-[#262730] pt-[153px] " + CJK}>
      <nav className="flex flex-col gap-[8px] px-[46px] text-[28px] font-medium leading-[36px] tracking-[-0.6px] text-[#bfc0c9]">
        <a className="flex h-[61.500px] items-center rounded-[15px] pl-[15px]"><span>HealthWise</span></a>
        <a className="flex h-[61.500px] items-center rounded-[15px] pl-[15px]"><span>Chatbot</span></a>
        <a className="flex h-[61.500px] items-center rounded-[15px] bg-[#4a4b56] pl-[15px] font-bold tracking-[-0.6px] text-white"><span className="-translate-y-px whitespace-pre">Disease Hotspots</span></a>
      </nav>
      <div className="mt-[38px] h-[2px] bg-[#4c4d58]" />
      <div className="flex flex-col px-[46px] pt-[36px]">
        <Field label="Start date" value="2024/12/06" />
        <Field label="End date" value="2024/12/12" />
        <span className="h-[63px] whitespace-pre pt-[14px] text-[25px] font-medium leading-[34px] tracking-[-0.7px] text-[#f3f3f4]">Choose disease ID</span>
        <div className="flex h-[77px] items-center justify-between rounded-[15px] bg-[#0c0e14] pl-[21px] pr-[30px] text-[28.5px] font-medium leading-[36px] tracking-[-0.75px] text-[#f5f5f6]">
          <span className="whitespace-pre">ENT (Ear/Nose/Thr…</span>
          <svg className="h-[12px] w-[21px]" viewBox="0 0 21 12" {...stroke} strokeWidth="3.200"><path d="M2 2.500L10.500 9.500L19 2.500" /></svg>
        </div>
      </div>
    </aside>
  );
}

function Recording() {
  return (
    <div className="mx-[57px] mt-[73px] flex h-[1819px] w-[2910px] flex-col overflow-hidden">
      <BrowserToolbar />
      <div className="h-[4px] shrink-0 border-b border-black/60 bg-linear-to-r from-[#ad443f] via-[#c08b61] to-[#cfc780]" />
      <div className="flex h-[1714px]">
        <Sidebar />
        <main className="relative flex w-[2440px] flex-col bg-[#0c0f14] pl-[536px] pt-[110px]">
          <span className="ml-[61px] h-[6px] w-[8px] shrink-0 bg-[#f0f0f0]" />
          <section className="mt-[33px] shrink-0"><HotspotMap /></section>
          <h2 className={"mb-[35px] mt-[46px] h-[60px] shrink-0 whitespace-pre text-[48px] font-bold leading-[60px] tracking-[-0.8px] text-[#fafafa] " + CJK}>Analysis of New Cases:</h2>
          <CasesChart />
          <svg className="absolute right-[69px] top-[51px] h-[28px] w-[9px]" viewBox="0 0 9 28" fill="#fafafa"><circle cx="4.500" cy="4.500" r="3.400" /><circle cx="4.500" cy="14" r="3.400" /><circle cx="4.500" cy="23.500" r="3.400" /></svg>
          <div className="absolute right-0 top-[111px] h-[498px] w-[12px] bg-[#6a6c70]" />
          <svg className="absolute left-[351px] top-[946px] h-[36px] w-[24px]" viewBox="0 0 24 36">
            <path d="M2 2V29L8 23.500L12.500 33.500L17 31.700L12.800 21.500H21Z" fill="#000" stroke="#e8e8e8" strokeWidth="2.200" strokeLinejoin="round" />
          </svg>
        </main>
      </div>
    </div>
  );
}

function Controls() {
  return (
    <div className="flex h-[125px] items-center text-[#e6e6e6]">
      <svg className="ml-[113px] h-[56px] w-[45px]" viewBox="0 0 45 56" fill="currentColor"><path d="M0 0L45 28L0 56Z" /></svg>
      <svg className="ml-[96px] h-[42px] w-[42px]" viewBox="0 0 42 42" fill="currentColor"><path d="M0 0L30 21L0 42ZM34.500 0H42V42H34.500Z" /></svg>
      <svg className="ml-[76px] h-[48px] w-[49px]" viewBox="8 9.230 18 17.540" fill="currentColor" preserveAspectRatio="none">
        <path d="M8,21 L12,21 L17,26 L17,10 L12,15 L8,15 Z M19,14 L19,22 C20.480,21.320 21.500,19.770 21.500,18 C21.500,16.260 20.480,14.740 19,14 Z M19,11.290 C21.890,12.150 24,14.830 24,18 C24,21.170 21.890,23.850 19,24.710 L19,26.770 C23.010,25.860 26,22.280 26,18 C26,13.720 23.010,10.140 19,9.230 Z" />
      </svg>
      <span className="-mt-[2px] ml-[52px] w-[300px] whitespace-pre font-['Roboto',sans-serif] text-[46.500px] leading-[54px] text-[#dddddd]">1:55 / 2:14</span>
      <div className="-mt-px ml-auto flex items-center">
        <svg className="h-[58px] w-[95px]" viewBox="0 0 95 58">
          <path d="M46 12.500H78a16.500 16.500 0 0 1 0 33H46Z" fill="#b4b4b4" opacity=".6" />
          <circle cx="27.500" cy="29" r="27" fill="#757575" stroke="#606060" strokeWidth="2" />
          <path d="M17.500 17h7.200v25h-7.200zM31 17h7.200v25H31z" fill="#fff" />
        </svg>
        <svg className="ml-[56px] h-[46px] w-[59px]" viewBox="0 0 59 46" fill="currentColor">
          <path fillRule="evenodd" d="M6 0H53a6 6 0 0 1 6 6V40a6 6 0 0 1-6 6H6a6 6 0 0 1-6-6V6a6 6 0 0 1 6-6ZM6.500 19.700v6h9.500v-6ZM22.800 19.700v6H51.300v-6ZM6.500 32.700v6H35v-6ZM42.200 32.700v6h9v-6Z" />
        </svg>
        <div className="relative ml-[69px] h-[52px] w-[74px]">
          <svg className="h-[52px] w-[50px]" viewBox="10 10 16 16" fill="currentColor" preserveAspectRatio="none">
            <path d="m 23.940,18.780 c .03,-0.250 .05,-0.510 .05,-0.780 0,-0.270 -0.020,-0.520 -0.050,-0.780 l 1.680,-1.320 c .15,-0.120 .19,-0.330 .09,-0.510 l -1.600,-2.760 c -0.090,-0.170 -0.310,-0.240 -0.480,-0.170 l -1.990,.8 c -0.410,-0.320 -0.860,-0.580 -1.350,-0.780 l -0.300,-2.120 c -0.020,-0.190 -0.190,-0.330 -0.390,-0.330 l -3.200,0 c -0.200,0 -0.360,.14 -0.390,.33 l -0.300,2.120 c -0.480,.2 -0.930,.47 -1.350,.78 l -1.990,-0.800 c -0.180,-0.070 -0.390,0 -0.480,.17 l -1.600,2.760 c -0.100,.17 -0.050,.39 .09,.51 l 1.680,1.320 c -0.030,.25 -0.050,.52 -0.050,.78 0,.26 .02,.52 .05,.78 l -1.680,1.320 c -0.150,.12 -0.190,.33 -0.090,.51 l 1.600,2.760 c .09,.17 .31,.24 .48,.17 l 1.990,-0.800 c .41,.32 .86,.58 1.350,.78 l .30,2.120 c .02,.19 .19,.33 .39,.33 l 3.200,0 c .2,0 .36,-0.140 .39,-0.330 l .30,-2.120 c .48,-0.200 .93,-0.470 1.350,-0.780 l 1.990,.8 c .18,.07 .39,0 .48,-0.170 l 1.600,-2.760 c .09,-0.170 .05,-0.390 -0.090,-0.510 l -1.680,-1.320 z m -5.940,2.010 c -1.540,0 -2.800,-1.250 -2.800,-2.800 0,-1.540 1.250,-2.800 2.800,-2.800 1.540,0 2.800,1.250 2.800,2.800 0,1.540 -1.250,2.800 -2.800,2.800 z" />
          </svg>
          <span className="absolute right-0 top-[-2px] flex h-[38px] w-[43px] items-center justify-center rounded-[4px] bg-[#bb2832] pt-[3px] font-['Roboto',sans-serif] text-[25px] font-bold leading-[38px] text-[#f0f0f0] [text-shadow:0_4px_0_#5c1519]">4K</span>
        </div>
        <svg className="ml-[40px] mt-[5px] h-[61px] w-[71px]" viewBox="0 0 71 61" fill="currentColor">
          <path d="M20 52H5a5 5 0 0 1-5-5V5a5 5 0 0 1 5-5H66a5 5 0 0 1 5 5V47a5 5 0 0 1-5 5H51V45.500H64V6.500H7V45.500H20ZM35.500 42L55 61H16Z" />
        </svg>
        <div className="relative ml-[63px] mr-[92px] h-[52px] w-[51px]">
          <svg className="h-[52px] w-[51px]" viewBox="0 0 51 52" fill="currentColor">
            <path d="M12.500 0H19.500V19.700H0V13H12.500ZM31.500 0H38.500V13H51V19.700H31.500ZM0 32H19.500V52H12.500V38.700H0ZM31.500 32H51V38.700H38.500V52H31.500Z" />
          </svg>
          <span className="absolute left-[19px] top-[20px] flex h-[52px] w-[52px] items-center justify-center rounded-full bg-[#2c2c2c]">
            <svg className="h-[27px] w-[27px] text-[#f4f4f4]" viewBox="0 0 27 27" {...stroke}>
              <path d="M1.500 8V5A3.500 3.500 0 0 1 5 1.500H8M19 1.500H22A3.500 3.500 0 0 1 25.500 5V8M25.500 19V22A3.500 3.500 0 0 1 22 25.500H19M8 25.500H5A3.500 3.500 0 0 1 1.500 22V19M8 8.500H19M7 13.500H20M8 18.500H15" />
            </svg>
          </span>
        </div>
      </div>
    </div>
  );
}

function PlayerChrome() {
  return (
    <div className="absolute inset-0 flex flex-col justify-between">
      <header className="mt-px flex items-start justify-between border-t border-[#4d4d4d] pl-[41px] pr-[54px]">
        <h1 className="mt-[46px] whitespace-pre font-['Roboto',sans-serif] text-[62px] leading-[68px] text-[#eeeeee] [text-shadow:0_0_4px_rgba(0,0,0,0.6)]">HealthWise demo</h1>
        <div className="relative flex items-start text-[#e8e8e8]">
          <svg className="mt-[47px] h-[70px] w-[70px]" viewBox="0 0 70 70" fill="currentColor"><path fillRule="evenodd" d="M35 .5a34.500 34.500 0 1 0 .01 0ZM28.500 14.500H35V34.500L52 44.500L48.800 50L28.500 38Z" /></svg>
          <svg className="ml-[54px] mt-[54px] h-[58px] w-[70px]" viewBox="0 0 70 58" fill="currentColor"><path d="M42.500 0L69.500 26.500L42.500 53V38C25 37 11 43 .5 57C4 35 18 18 42.500 15Z" /></svg>
          <span className="absolute right-[28px] top-[25px] h-[12px] w-[12px] rounded-full bg-[#2a2660]" />
        </div>
      </header>
      <footer className="flex flex-col">
        <div className="mx-[55px] h-[12px] border-b border-[#4b4d4f] bg-[#87888a]">
          <div className="h-[11px] w-[2503px] bg-linear-to-r from-[#eb343d] from-80% to-[#ea4092]" />
        </div>
        <Controls />
      </footer>
    </div>
  );
}

export default function App() {
  return (
    <div className="relative flex h-[1892px] w-[3024px] flex-col overflow-hidden bg-black">
      <Recording />
      <div className="pointer-events-none absolute inset-x-0 top-[178px] h-[180px] bg-linear-to-b from-black/15 to-transparent" />
      <div className="pointer-events-none absolute inset-x-0 bottom-0 h-[842px] bg-[linear-gradient(to_bottom,rgba(0,0,0,0)_0%,rgba(0,0,0,0.05)_20%,rgba(0,0,0,0.13)_45%,rgba(0,0,0,0.26)_72%,rgba(0,0,0,0.31)_86%,rgba(0,0,0,0.4)_90%,rgba(0,0,0,0.66)_100%)]" />
      <PlayerChrome />
    </div>
  );
}
